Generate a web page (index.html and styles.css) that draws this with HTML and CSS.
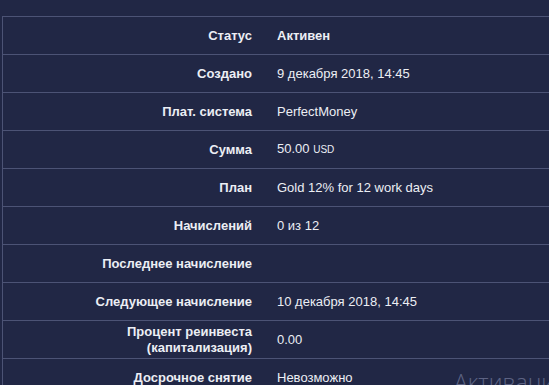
FILE: index.html
```html
<!DOCTYPE html>
<html lang="ru">
<head>
<meta charset="utf-8">
<link rel="stylesheet" href="styles.css">
</head>
<body>
<div class="panel">
  <div class="row"><div class="label">Статус</div><div class="value strong">Активен</div></div>
  <div class="row"><div class="label">Создано</div><div class="value">9 декабря 2018, 14:45</div></div>
  <div class="row"><div class="label">Плат. система</div><div class="value">PerfectMoney</div></div>
  <div class="row"><div class="label">Сумма</div><div class="value">50.00 <span class="cur">USD</span></div></div>
  <div class="row"><div class="label">План</div><div class="value">Gold 12% for 12 work days</div></div>
  <div class="row"><div class="label">Начислений</div><div class="value">0 из 12</div></div>
  <div class="row"><div class="label">Последнее начисление</div><div class="value"></div></div>
  <div class="row"><div class="label">Следующее начисление</div><div class="value">10 декабря 2018, 14:45</div></div>
  <div class="row"><div class="label">Процент реинвеста<br>(капитализация)</div><div class="value">0.00</div></div>
  <div class="row"><div class="label">Досрочное снятие</div><div class="value">Невозможно</div></div>
</div>
<div class="watermark">Активация Windows</div>
</body>
</html>
```
FILE: styles.css
```css
html, body {
  margin: 0;
  padding: 0;
  background: #212745;
  overflow: hidden;
  height: 385px;
}
body {
  font-family: "Liberation Sans", Arial, sans-serif;
  font-size: 13px;
  color: #eceef4;
  position: relative;
}
.panel {
  margin-top: 16px;
  margin-left: 2px;
  width: 620px;
  border-top: 1px solid #4c5375;
  border-left: 1px solid #4c5375;
}
.row {
  display: grid;
  grid-template-columns: 261px 1fr;
  height: 37px;
  border-bottom: 1px solid #4c5375;
  align-items: center;
}
.label {
  text-align: right;
  padding-right: 12px;
  font-weight: bold;
  line-height: 16px;
}
.value {
  padding-left: 13px;
  line-height: 16px;
}
.strong {
  font-weight: bold;
}
.cur {
  font-size: 10px;
}
.watermark {
  position: absolute;
  left: 454px;
  top: 366px;
  font-size: 23px;
  color: #5d6383;
  white-space: nowrap;
  font-family: "Open Sans", "Liberation Sans", sans-serif;
  font-weight: 300;
}
```
